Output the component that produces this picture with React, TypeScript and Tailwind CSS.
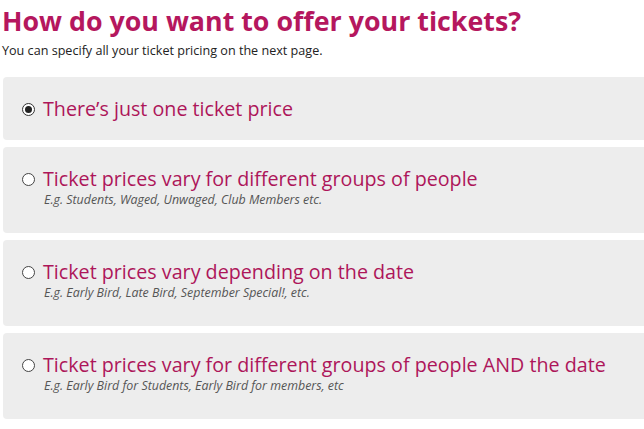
const options = [
  { title: "There\u2019s just one ticket price", hint: "", checked: true },
  {
    title: "Ticket prices vary for different groups of people",
    hint: "E.g. Students, Waged, Unwaged, Club Members etc.",
    checked: false,
  },
  {
    title: "Ticket prices vary depending on the date",
    hint: "E.g. Early Bird, Late Bird, September Special!, etc.",
    checked: false,
  },
  {
    title: "Ticket prices vary for different groups of people AND the date",
    hint: "E.g. Early Bird for Students, Early Bird for members, etc",
    checked: false,
  },
];

function Radio({ checked }: { checked: boolean }) {
  return (
    <span
      className={`flex h-[13px] w-[13px] shrink-0 items-center justify-center rounded-full border ${
        checked ? "border-[#333]" : "border-[#444]"
      } bg-white`}
    >
      {checked && <span className="h-[7px] w-[7px] rounded-full bg-[#222]" />}
    </span>
  );
}

export default function App() {
  return (
    <div className="min-h-[429px] w-[644px] overflow-hidden bg-white font-['Open_Sans',sans-serif]">
      <h1 className="pl-[2px] pt-[2px] text-[26.8px] font-bold leading-[38px] text-[#b5175e]">
        How do you want to offer your tickets?
      </h1>
      <p className="pl-[2px] pt-[2px] text-[12.6px] leading-[18px] text-[#222]">
        You can specify all your ticket pricing on the next page.
      </p>
      <div className="mt-[17px] flex flex-col gap-[7px] pl-[3px]">
        {options.map((o) => (
          <div
            key={o.title}
            className={`w-[660px] rounded-[4px] bg-[#ededed] pl-[19px] pt-[19px] ${
              o.hint ? "pb-[25px]" : "pb-[18px]"
            }`}
          >
            <div className="flex items-center gap-[8px]">
              <Radio checked={o.checked} />
              <span className="text-[19.7px] leading-[26px] whitespace-nowrap text-[#ad165a]">
                {o.title}
              </span>
            </div>
            {o.hint && (
              <p className="pl-[22px] text-[12.4px] italic leading-[16px] text-[#555]">
                {o.hint}
              </p>
            )}
          </div>
        ))}
      </div>
    </div>
  );
}
